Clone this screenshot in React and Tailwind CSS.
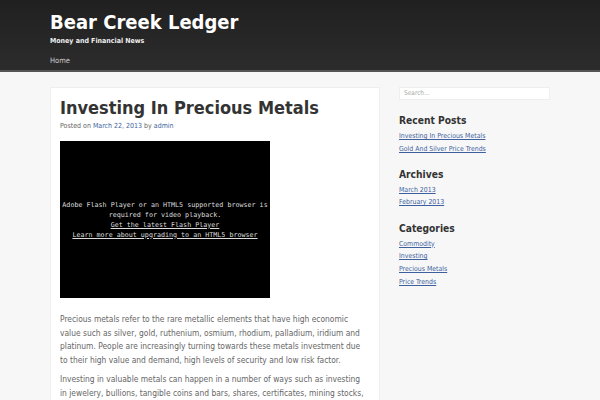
const recentPosts = ["Investing In Precious Metals", "Gold And Silver Price Trends"];
const archives = ["March 2013", "February 2013"];
const categories = ["Commodity", "Investing", "Precious Metals", "Price Trends"];

const Widget = ({ title, items, first }) => (
  <div className={first ? "mt-[14px]" : "mt-[12.5px]"}>
    <h3 className="text-[10.2px] font-bold leading-[14px] text-[#333]">{title}</h3>
    <ul className="mt-[2px]">
      {items.map((item) => (
        <li key={item} className="h-[12.67px] text-[6.9px] leading-[12.67px]">
          <a className="text-[#3d5f9e] underline">{item}</a>
        </li>
      ))}
    </ul>
  </div>
);

const App = () => {
  return (
    <div
      className="min-h-[400px] overflow-hidden bg-[#f7f7f7] [font-stretch:condensed]"
      style={{ fontFamily: '"DejaVu Sans", sans-serif' }}
    >
      <header className="h-[72px] border-b-[2px] border-[#555] bg-gradient-to-b from-[#202020] to-[#2c2c2c]">
        <div className="mx-auto w-[500px] pt-[10px]">
          <h1 className="text-[20px] font-bold leading-[24px] text-white">
            Bear Creek Ledger
          </h1>
          <p className="mt-[2px] text-[7px] font-bold leading-[10px] text-[#eee]">
            Money and Financial News
          </p>
          <nav className="mt-[10px] text-[7.5px] leading-[10px] text-[#ccc]">Home</nav>
        </div>
      </header>

      <div className="mx-auto mt-[15px] flex w-[500px] gap-[19px]">
        <main className="w-[330px] border border-[#eee] bg-white px-[9px] pt-[10px] pb-4">
          <h2 className="text-[18px] font-bold leading-[20px] text-[#333]">
            Investing In Precious Metals
          </h2>
          <p className="mt-[3px] text-[7px] leading-[10px] text-[#666]">
            Posted on <a className="text-[#3d5f9e]">March 22, 2013</a> by{" "}
            <a className="text-[#3d5f9e]">admin</a>
          </p>
          <div
            className="mt-[10px] flex h-[157px] w-[210px] flex-col items-center justify-center bg-black text-center text-[6.7px] leading-[10px] text-[#ddd] [font-stretch:normal]"
            style={{ fontFamily: '"DejaVu Sans Mono", monospace' }}
          >
            <p>Adobe Flash Player or an HTML5 supported browser is</p>
            <p>required for video playback.</p>
            <a className="underline">Get the latest Flash Player </a>
            <a className="underline">Learn more about upgrading to an HTML5 browser</a>
          </div>
          <div className="mt-[15px] mr-[3px] text-[8.4px] leading-[13.5px] text-[#666]">
            <p>
              Precious metals refer to the rare metallic elements that have high economic
              value such as silver, gold, ruthenium, osmium, rhodium, palladium, iridium and
              platinum. People are increasingly turning towards these metals investment due
              to their high value and demand, high levels of security and low risk factor.
            </p>
            <p className="mt-[6px]">
              Investing in valuable metals can happen in a number of ways such as investing
              in jewelery, bullions, tangible coins and bars, shares, certificates, mining stocks,
              and exchange traded funds.
            </p>
          </div>
        </main>

        <aside className="w-[151px]">
          <div className="h-[13px] border border-[#eee] bg-white px-[4px] text-[6.5px] leading-[11px] text-[#aaa]">
            Search...
          </div>
          <Widget first title="Recent Posts" items={recentPosts} />
          <Widget title="Archives" items={archives} />
          <Widget title="Categories" items={categories} />
        </aside>
      </div>
    </div>
  );
};

export default App;
